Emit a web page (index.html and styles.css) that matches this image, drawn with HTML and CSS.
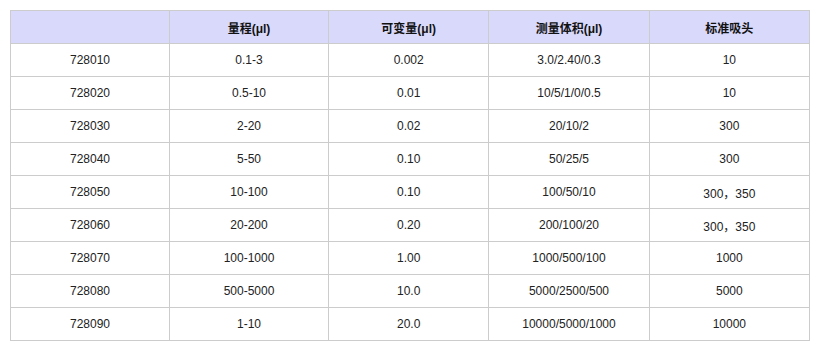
FILE: index.html
```html
<!DOCTYPE html>
<html lang="zh-CN">
<head>
    <meta charset="UTF-8">
    <title>移液器规格</title>
    <link rel="stylesheet" href="styles.css">
</head>
<body>
    <table class="spec-table">
        <thead>
            <tr>
                <th></th>
                <th>量程(μl)</th>
                <th>可变量(μl)</th>
                <th>测量体积(μl)</th>
                <th>标准吸头</th>
            </tr>
        </thead>
        <tbody>
            <tr><td>728010</td><td>0.1-3</td><td>0.002</td><td>3.0/2.40/0.3</td><td>10</td></tr>
            <tr><td>728020</td><td>0.5-10</td><td>0.01</td><td>10/5/1/0/0.5</td><td>10</td></tr>
            <tr><td>728030</td><td>2-20</td><td>0.02</td><td>20/10/2</td><td>300</td></tr>
            <tr><td>728040</td><td>5-50</td><td>0.10</td><td>50/25/5</td><td>300</td></tr>
            <tr><td>728050</td><td>10-100</td><td>0.10</td><td>100/50/10</td><td>300，350</td></tr>
            <tr><td>728060</td><td>20-200</td><td>0.20</td><td>200/100/20</td><td>300，350</td></tr>
            <tr><td>728070</td><td>100-1000</td><td>1.00</td><td>1000/500/100</td><td>1000</td></tr>
            <tr><td>728080</td><td>500-5000</td><td>10.0</td><td>5000/2500/500</td><td>5000</td></tr>
            <tr><td>728090</td><td>1-10</td><td>20.0</td><td>10000/5000/1000</td><td>10000</td></tr>
        </tbody>
    </table>
</body>
</html>
```

FILE: styles.css
```css
* {
    margin: 0;
    padding: 0;
    box-sizing: border-box;
}

body {
    font-family: "Liberation Sans", Arial, "Noto Sans CJK SC", sans-serif;
    font-size: 12px;
    color: #222;
    background-color: #fff;
    padding: 10px;
}

.spec-table {
    width: 800px;
    border-collapse: collapse;
    table-layout: fixed;
}

.spec-table th,
.spec-table td {
    border: 1px solid #ccc;
    height: 33px;
    text-align: center;
    vertical-align: middle;
    padding: 0 4px;
}

.spec-table th:nth-child(1),
.spec-table th:nth-child(2) {
    width: 159px;
}

.spec-table th {
    background-color: #d9d9fc;
    color: #111;
    font-weight: bold;
}
```
